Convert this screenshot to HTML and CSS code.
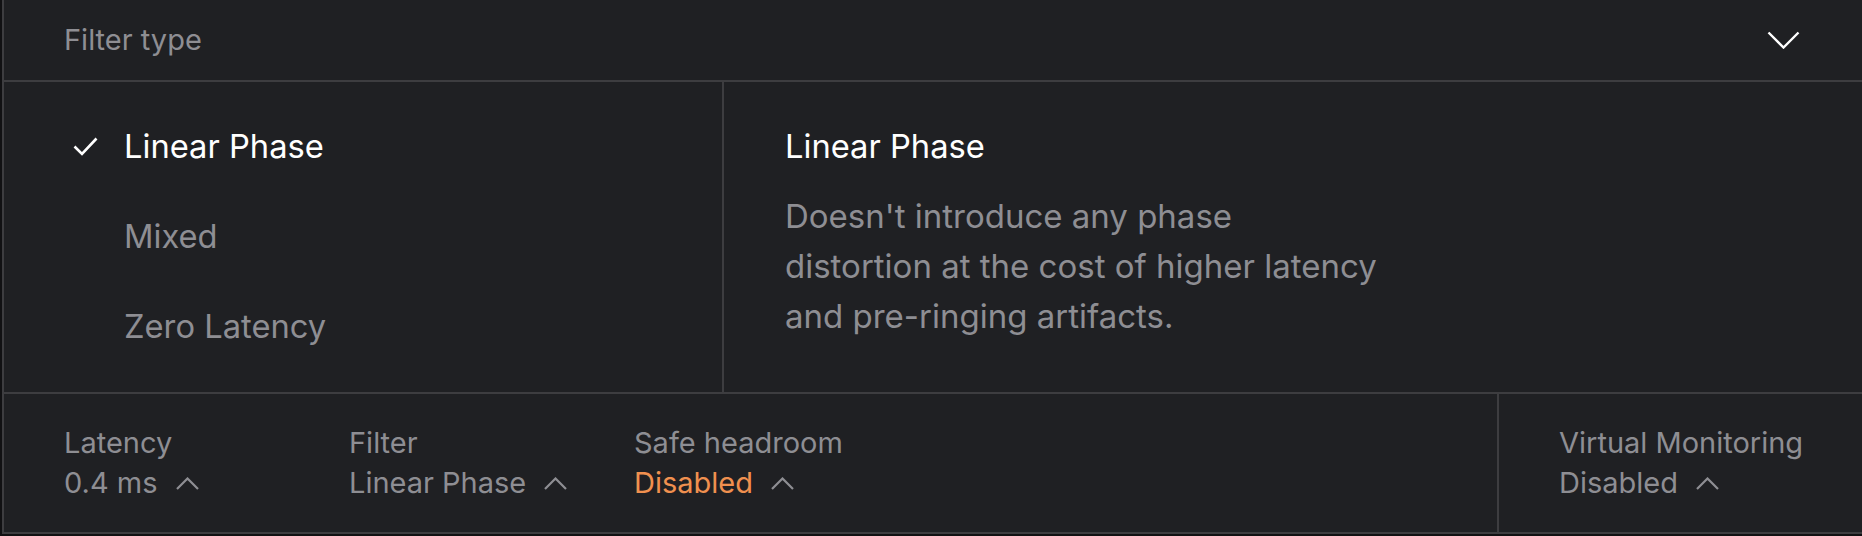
FILE: index.html
```html
<!doctype html>
<html lang="en">
<head>
  <meta charset="UTF-8">
  <title>Filter type</title>
  <meta name="viewport" content="width=device-width, initial-scale=1.0">
  <link rel="stylesheet" href="styles.css">
</head>
<body>

  <div class="panel">
    <div class="panel-head">
      <span class="head-title">Filter type</span>
      <svg class="head-chevron" width="33" height="18" viewBox="0 0 33 18">
        <path d="M1.5 1.5 L16.5 16.5 L31.5 1.5" />
      </svg>
    </div>

    <div class="panel-body">
      <ul class="type-list">
        <li class="type-item active">
          <span class="check">
            <svg width="25" height="19" viewBox="0 0 25 19"><path d="M1.5 9.5 L9 17 L23.5 1.5" /></svg>
          </span>
          Linear Phase
        </li>
        <li class="type-item"><span class="check"></span>Mixed</li>
        <li class="type-item"><span class="check"></span>Zero Latency</li>
      </ul>

      <div class="type-info">
        <h3>Linear Phase</h3>
        <p>Doesn't introduce any phase<br>distortion at the cost of higher latency<br>and pre-ringing artifacts.</p>
      </div>
    </div>

    <div class="panel-foot">
      <div class="stats">
        <div class="stat">
          <div class="stat-label">Latency</div>
          <div class="stat-value">0.4 ms <svg class="up" width="23" height="13" viewBox="0 0 23 13"><path d="M1 12 L11.5 1.5 L22 12" /></svg></div>
        </div>
        <div class="stat">
          <div class="stat-label">Filter</div>
          <div class="stat-value">Linear Phase <svg class="up" width="23" height="13" viewBox="0 0 23 13"><path d="M1 12 L11.5 1.5 L22 12" /></svg></div>
        </div>
        <div class="stat">
          <div class="stat-label">Safe headroom</div>
          <div class="stat-value warn">Disabled <svg class="up" width="23" height="13" viewBox="0 0 23 13"><path d="M1 12 L11.5 1.5 L22 12" /></svg></div>
        </div>
      </div>
      <div class="monitor">
        <div class="stat-label">Virtual Monitoring</div>
        <div class="stat-value">Disabled <svg class="up" width="23" height="13" viewBox="0 0 23 13"><path d="M1 12 L11.5 1.5 L22 12" /></svg></div>
      </div>
    </div>
  </div>

</body>
</html>
```

FILE: styles.css
```css
body {
  margin: 0;
  background: #111113;
  font-family: 'Inter', 'Noto Sans', sans-serif;
  color: #8e8e93;
  overflow: hidden;
}

.panel {
  margin-left: 2px;
  background: #1f2023;
  border-left: 2px solid #3d3d40;
  border-bottom: 2px solid #3d3d40;
}

/* header */
.panel-head {
  height: 80px;
  display: flex;
  align-items: center;
  justify-content: space-between;
  padding: 0 62px 0 60px;
  border-bottom: 2px solid #3d3d40;
}
.head-title {
  font-size: 29px;
  line-height: 80px;
}
.head-chevron path {
  fill: none;
  stroke: #fff;
  stroke-width: 2.4;
}

/* body */
.panel-body {
  display: flex;
  border-bottom: 2px solid #3d3d40;
}
.type-list {
  list-style: none;
  margin: 0;
  width: 720px;
  box-sizing: border-box;
  padding: 19px 0 21px 61px;
  border-right: 2px solid #3d3d40;
}
.type-item {
  display: flex;
  align-items: center;
  height: 90px;
  font-size: 32.7px;
  color: #8e8e93;
}
.type-item.active {
  color: #fff;
}
.check {
  width: 59px;
  display: flex;
  padding-left: 8px;
  box-sizing: border-box;
}
.check path {
  fill: none;
  stroke: #fff;
  stroke-width: 2.6;
}

.type-info {
  padding: 39px 61px 41px;
}
.type-info h3 {
  margin: 0 0 20px;
  font-size: 32.7px;
  font-weight: 400;
  line-height: 50px;
  color: #fff;
}
.type-info p {
  margin: 0;
  font-size: 33px;
  line-height: 50px;
}

/* footer */
.panel-foot {
  display: flex;
}
.stats {
  flex: 1;
  display: grid;
  grid-template-columns: 285px 285px 285px;
  padding: 29px 60px;
  border-right: 2px solid #3d3d40;
}
.monitor {
  width: 363px;
  box-sizing: border-box;
  padding: 29px 60px;
}
.stat-label,
.stat-value {
  font-size: 29px;
  line-height: 40px;
  white-space: nowrap;
}
.stat-value {
  display: flex;
  align-items: center;
}
.stat-value .up {
  margin-left: 18px;
}
.up path {
  fill: none;
  stroke: #8e8e93;
  stroke-width: 2.2;
}
.warn {
  color: #f0904f;
}
```
